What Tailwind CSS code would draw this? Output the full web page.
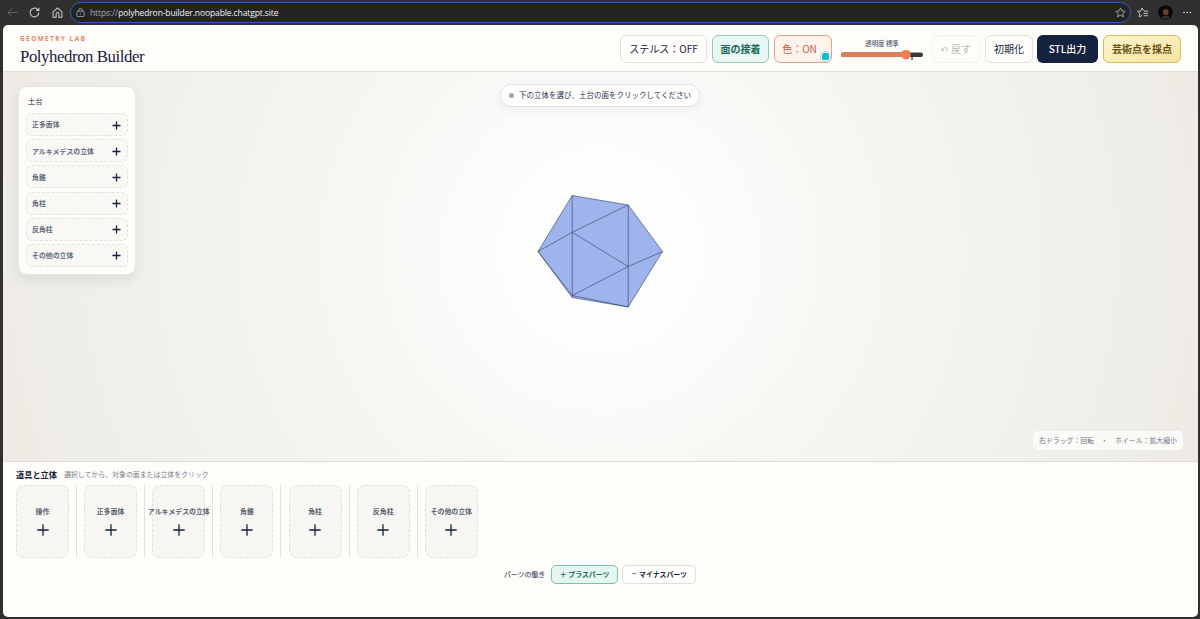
<!DOCTYPE html>
<html lang="ja">
<head>
  <meta charset="UTF-8">
  <meta name="viewport" content="width=device-width, initial-scale=1.0">
  <title>Polyhedron Builder</title>
  <script src="https://cdn.jsdelivr.net/npm/@tailwindcss/browser@4"></script>
</head>
<body class="h-screen overflow-hidden bg-[#303030] font-['Noto_Sans_CJK_JP',sans-serif] text-[#17213f]">
  <div class="flex h-[619px] flex-col">
    <!-- Browser toolbar -->
    <div class="flex h-[25px] shrink-0 items-center text-[#d0d0d0]">
      <svg class="ml-[7px] h-[11px] w-[11px] text-[#6c6c6c]" viewBox="0 0 12 12" fill="none" stroke="currentColor"><path d="M11.5 6H1M5.5 1.5 1 6l4.500 4.500"/></svg>
      <svg class="ml-[11px] h-[11px] w-[11px]" viewBox="0 0 12 12" fill="none" stroke="currentColor" stroke-width="1.1"><path d="M10.800 6a4.800 4.800 0 1 1-1.500-3.500L10.500 3.600M10.800.8v3H7.800"/></svg>
      <svg class="ml-[12px] h-[11px] w-[11px]" viewBox="0 0 12 12" fill="none" stroke="currentColor" stroke-width="1.1" stroke-linejoin="round"><path d="M1.200 5.200 6 1l4.800 4.200v6H7.500V7.500a1.500 1.500 0 0 0-3 0v3.700H1.200z"/></svg>
      <div class="ml-[7px] flex h-[21px] w-[1061px] items-center rounded-full border-[1.5px] border-[#315fb0] bg-[#242426] pl-[5px] pr-[4px]">
        <svg class="h-[9px] w-[9px] text-[#a0a0a0]" viewBox="0 0 10 10" fill="none" stroke="currentColor"><rect x="1" y="3.500" width="8" height="6" rx="1.200"/><path d="M3 3.500V2.500a2 2 0 0 1 4 0v1M4.500 6.500h1"/></svg>
        <span class="ml-[5px] mt-[1px] whitespace-nowrap font-['Open_Sans',sans-serif] text-[8.500px] tracking-[-0.110px] text-[#a8a8a8]">https://<span class="text-[#f2f2f2]">polyhedron-builder.noopable.chatgpt.site</span></span>
        <svg class="ml-auto h-[11px] w-[11px] text-[#a8a8a8]" viewBox="0 0 12 12" fill="none" stroke="currentColor" stroke-linejoin="round"><path d="m6 1 1.500 3.300 3.600.4-2.700 2.400.8 3.600L6 8.900l-3.200 1.800.8-3.600L.9 4.700l3.600-.4z"/></svg>
      </div>
      <svg class="ml-[6px] h-[11px] w-[11px]" viewBox="0 0 12 12" fill="none" stroke="currentColor" stroke-linejoin="round"><path d="M7.500 4 5.500 1 4.200 4.300.6 4.800l2.500 2.400-.6 3.700 3-1.700M7.500 4.500H12M7 7h5M7.500 9.500H12"/></svg>
      <svg class="ml-[10px] h-[15px] w-[15px]" viewBox="0 0 15 15"><circle cx="7.500" cy="7.500" r="7.300" fill="#080808"/><ellipse cx="7.700" cy="6.700" rx="2.800" ry="3.500" fill="#63422e"/><path d="M4.700 5Q7.500 1 10.600 5Q9 3.900 4.700 5" fill="#17120f"/><path d="M3.500 13q.5-2.500 3-2.500l1 1 1.500-1q2.500.3 2.500 2.500-4 2-8 0" fill="#273328"/></svg>
      <svg class="ml-[9px] h-[3px] w-[10px]" viewBox="0 0 10 3" fill="#e8e8e8"><circle cx="2" cy="1.500" r=".8"/><circle cx="5.200" cy="1.500" r=".8"/><circle cx="8.400" cy="1.500" r=".8"/></svg>
    </div>

    <div class="ml-[3px] mr-[2px] flex h-[592px] flex-col overflow-hidden rounded-[5px] bg-[#fefdfa]">
      <header class="flex h-[47px] shrink-0 items-center border-b border-[#e1e0da] pl-[17px] pr-[17px]">
        <div class="flex h-full flex-col pt-[10px]">
          <p class="font-['Open_Sans',sans-serif] text-[6.200px] font-bold leading-[8px] tracking-[1.600px] text-[#ef8159]">GEOMETRY LAB</p>
          <h1 class="mt-[4px] whitespace-nowrap font-['Liberation_Serif',serif] text-[16.800px] leading-[20px] tracking-[-0.430px]">Polyhedron Builder</h1>
        </div>
        <div class="ml-auto flex items-center whitespace-nowrap pt-[1px] text-[10px]">
          <button class="h-[28px] w-[87px] rounded-[6px] border border-[#e1e0dd] bg-[#fffefc]">ステルス：OFF</button>
          <button class="ml-[5px] h-[28px] w-[57px] rounded-[6px] border border-[#8fc9bf] bg-[#e8f7f3] font-bold text-[#17685e]">面の接着</button>
          <button class="relative ml-[5px] h-[28px] w-[58px] rounded-[6px] border border-[#e8a183] bg-[#fff3ed] pr-[7px] text-[#c55f3c]">色：ON
            <span class="absolute bottom-[0px] right-[0px] h-[11px] w-[11px] rounded-[4px] border border-[#b9dfe1] bg-white p-[1px]"><span class="block h-full w-full rounded-[1.5px] bg-[#11bfd3]"></span></span>
          </button>
          <div class="ml-[9px] flex h-[28px] w-[82px] flex-col items-center">
            <span class="mt-[4px] text-[6.400px] font-medium leading-[9px] text-[#555e72]">透明度 標準</span>
            <svg class="mt-[1px] h-[12px] w-[82px]" viewBox="0 0 82 12"><rect y="3.500" width="82" height="4.500" rx="2" fill="#383a37"/><path d="M71 7v4" stroke="#383a37" stroke-width="1.200"/><rect y="3.500" width="67" height="4.500" rx="2" fill="#e97b52"/><circle cx="65" cy="5.700" r="4.800" fill="#f07f4e"/></svg>
          </div>
          <button class="ml-[9px] flex h-[28px] w-[48px] items-center justify-center gap-[2px] rounded-[6px] border border-[#f3f2ef] text-[#b9babd]">
            <svg class="h-[8px] w-[8px]" viewBox="0 0 8 8" fill="none" stroke="currentColor" stroke-width=".9"><path d="M1 3.300v2.200h2.200M1.200 5.200A2.700 2.700 0 0 1 6.500 4.500Q6.500 6 5.200 6.500"/></svg>戻す
          </button>
          <button class="ml-[5px] h-[28px] w-[48px] rounded-[6px] border border-[#e1e0dd] bg-[#fffefc]">初期化</button>
          <button class="ml-[4px] h-[28px] w-[61px] rounded-[6px] bg-[#14213f] font-medium text-white">STL出力</button>
          <button class="ml-[5px] h-[28px] w-[78px] rounded-[6px] border border-[#d6bd66] bg-linear-to-br from-[#fff6cf] to-[#f5e3a0] font-bold text-[#684c0d]">芸術点を採点</button>
        </div>
      </header>

      <!-- Stage -->
      <main class="relative h-[390px] shrink-0 border-b border-[#dddcd6] bg-[radial-gradient(circle_at_50%_46%,#fefefe_0px,#fdfdfc_90px,#f7f6f3_260px,#f2f1ec_430px,#edebe4_620px)]">
        <svg class="h-full w-full" viewBox="0 0 1195 389" stroke="#31425f" stroke-opacity=".85" stroke-width=".7" stroke-linejoin="round">
          <path d="M569.200 123.500 625.200 133 659.500 179.500 625.200 235 569.200 225.500 535 179.500z" fill="#9fb4ed"/>
          <path d="M569.200 123.500V225.500M625.200 133V235M535 179.500 569.200 160.300 625.200 133M569.200 160.300 625.200 194.500M569.200 223.500 625.200 194.500 659.500 179.500M535 179.500 569.200 223.500 625.200 235" fill="none"/>
        </svg>

        <aside class="absolute left-[15px] top-[14px] w-[118px] rounded-[9px] border border-[#e8e7e3] bg-[#fefdfa] px-[7px] pb-[7px] pt-[8px] shadow-[0_5px_14px_rgba(30,35,50,0.09)]">
          <h2 class="mb-[6px] pl-[2px] text-[7px] font-medium leading-[12px] tracking-[0.600px] text-[#505a6d]">土台</h2>
          <div id="bases" class="flex flex-col gap-[3.200px]"></div>
        </aside>

        <div class="absolute left-[497px] top-[12px] flex h-[23px] w-[200px] items-center whitespace-nowrap rounded-full border border-[#e2e2e0] bg-[#fffefd] pb-[1px] pl-[8px] text-[7.500px] text-[#27324d] shadow-[0_3px_9px_rgba(30,35,50,0.06)]">
          <span class="mr-[5px] h-[5px] w-[5px] rounded-full bg-[#a1a6b1]"></span>下の立体を選び、土台の面をクリックしてください
        </div>
        <div class="absolute bottom-[11px] right-[15px] flex h-[19px] w-[150px] items-center justify-between whitespace-nowrap rounded-[5px] bg-[#fafaf7] px-[6px] text-[6.900px] text-[#717887]">
          <span>右ドラッグ：回転</span><span>・</span><span>ホイール：拡大縮小</span>
        </div>
      </main>

      <section class="flex flex-col">
        <div class="flex h-[23px] items-center whitespace-nowrap pl-[13px] pt-[2px]">
          <h2 class="text-[8.200px] font-bold">道具と立体</h2>
          <p class="ml-[7px] text-[6.920px] text-[#777e8c]">選択してから、対象の面または立体をクリック</p>
        </div>
        <div id="tools" class="ml-[13px] flex h-[73px]"></div>
        <div class="mt-[7px] flex h-[19px] items-center justify-center whitespace-nowrap pr-[1px] text-[6.900px]">
          <span class="mr-[6px] font-medium text-[#515a6d]">パーツの働き</span>
          <button class="h-[19px] w-[67px] rounded-[5px] border border-[#81bdb1] bg-[#e5f6f0] font-bold text-[#216b60]">＋ プラスパーツ</button>
          <button class="ml-[4px] flex h-[19px] w-[74px] items-center justify-center rounded-[5px] border border-[#dfdfe0] bg-[#fffefd] font-bold"><span class="mr-[2px] font-['DejaVu_Sans',sans-serif] font-normal">−</span>マイナスパーツ</button>
        </div>
      </section>
    </div>
  </div>

  <script>
    const shapes = ["正多面体", "アルキメデスの立体", "角錐", "角柱", "反角柱", "その他の立体"];

    document.getElementById("bases").innerHTML = shapes.map((name) => `
      <button class="flex h-[23px] w-[102px] items-center justify-between whitespace-nowrap rounded-[6px] border border-dashed border-[#e4e2dd] bg-[#f9f8f5] pl-[5px] pr-[6px] text-[6.900px] font-bold text-[#626b7c]">
        ${name}
        <svg class="mt-[1px] h-[9px] w-[9px] shrink-0" viewBox="0 0 9 9" stroke="#14213f" stroke-width="1.300"><path d="M.5 4.500h8M4.500.5v8"/></svg>
      </button>`).join("");

    document.getElementById("tools").innerHTML = ["操作", ...shapes].map((name, i) => `
      <div class="flex w-[68.150px] shrink-0">
        <button class="flex h-[73px] w-[53px] shrink-0 flex-col items-center whitespace-nowrap rounded-[8px] border border-dashed border-[#e2e0da] bg-[#f8f6f2] pt-[19px] text-[6.900px] font-bold leading-[12px] text-[#59616f]">
          <span class="flex w-full justify-center">${name}</span>
          <svg class="mt-[6.500px] h-[12px] w-[12px]" viewBox="0 0 12 12" stroke="#14213f" stroke-width="1.300"><path d="M.3 6h11.400M6 .3v11.400"/></svg>
        </button>
        ${i < shapes.length ? '<span class="ml-[7px] w-px bg-[#e1e0dc]"></span>' : ""}
      </div>`).join("");
  </script>
</body>
</html>
